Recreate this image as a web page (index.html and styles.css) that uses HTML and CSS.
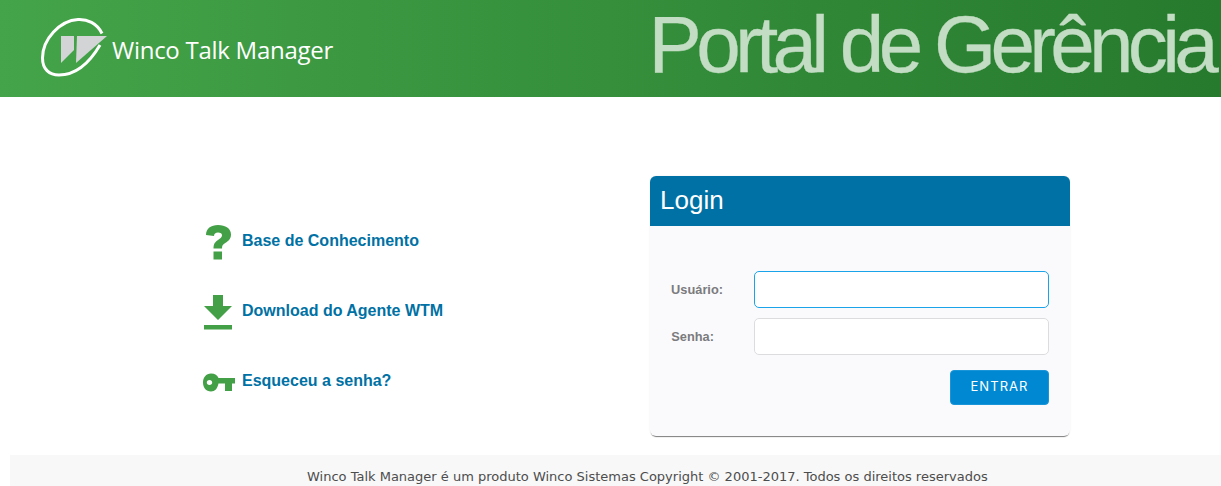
FILE: index.html
```html
<!DOCTYPE html>
<html lang="pt-BR">
<head>
<meta charset="utf-8">
<title>Portal de Gerência</title>
<link rel="stylesheet" href="styles.css">
</head>
<body>
<header class="top">
  <div class="brand">
    <svg class="logo" width="68" height="60" viewBox="0 0 68 60">
      <path d="M62 16.500C57 6 47 2 38 2.500C20 3.500 2.500 22 2.500 41C2.500 52 9 58 19 58C36 58 50 45 60 28" fill="none" stroke="#fff" stroke-width="3"/>
      <path d="M21 19H34V33L21 46Z" fill="#d2d4d6"/>
      <path d="M37 19H67L36 46Z" fill="#d2d4d6"/>
    </svg>
    <span class="brand-name">Winco Talk Manager</span>
  </div>
  <h1 class="title">Portal de Gerência</h1>
</header>
<main class="content">
  <nav class="links">
    <a class="link" href="#">
      <span class="icon">
        <svg width="30" height="40" viewBox="0 0 30 40"><path transform="translate(0 2.500)" d="M3 12.500C3 6 8 2.500 15 2.500C22.500 2.500 28 6 28 12C28 17 24.500 19 21.500 21C19.500 22.300 19 23.500 19 26H10.500C10.500 21.500 12 19.500 15 17.500C17.500 15.800 19 14.800 19 12.800C19 11 17.500 10 15 10C12.500 10 11 11.300 11 13.500Z M10.500 29H19V37H10.500Z" fill="#43a047"/></svg>
      </span>
      <span class="link-text">Base de Conhecimento</span>
    </a>
    <a class="link" href="#">
      <span class="icon">
        <svg width="30" height="40" viewBox="0 0 30 40"><path transform="translate(0 5)" d="M10 0H20V11H29L15 25L1 11H10ZM1 30H29V34.500H1Z" fill="#43a047"/></svg>
      </span>
      <span class="link-text">Download do Agente WTM</span>
    </a>
    <a class="link" href="#">
      <span class="icon">
        <svg width="34" height="30" viewBox="0 0 34 30"><path fill-rule="evenodd" d="M10 8.500C14 8.500 16.500 10.500 17.500 13H34V18.500H31V26H24V18.500H17.500C16.500 23.500 14 26.500 10 26.500C5 26.500 2 22.500 2 17.500C2 12.500 5 8.500 10 8.500ZM8.500 15C6.800 15 5.800 16 5.800 17.500C5.800 19 6.800 20 8.500 20C10.200 20 11.200 19 11.200 17.500C11.200 16 10.200 15 8.500 15Z" fill="#43a047"/></svg>
      </span>
      <span class="link-text">Esqueceu a senha?</span>
    </a>
  </nav>
  <section class="card">
    <h2 class="card-title">Login</h2>
    <form class="card-body">
      <div class="row">
        <label class="label" for="user">Usuário:</label>
        <input class="field field-focus" id="user" type="text">
      </div>
      <div class="row">
        <label class="label label-alt" for="pass">Senha:</label>
        <input class="field" id="pass" type="password">
      </div>
      <div class="actions">
        <button class="btn" type="button">ENTRAR</button>
      </div>
    </form>
  </section>
</main>
<footer class="foot">Winco Talk Manager é um produto Winco Sistemas Copyright © 2001-2017. Todos os direitos reservados</footer>
</body>
</html>
```
FILE: styles.css
```css
* { box-sizing: border-box; }
html, body { margin: 0; padding: 0; }
body { background: #fff; height: 486px; overflow: hidden; font-family: "Liberation Sans", Arial, sans-serif; }
.top {
  height: 97px;
  background: linear-gradient(90deg, #44a449 0%, #267a2d 100%);
  display: flex;
  justify-content: space-between;
  align-items: flex-start;
  padding: 0 8px 0 40px;
  overflow: hidden;
}
.brand { display: flex; align-items: center; height: 97px; }
.logo { display: block; margin-top: -3px; flex: none; }
.brand-name { color: #fff; font-family: "Open Sans", sans-serif; font-size: 24px; margin-left: 4px; letter-spacing: -0.27px; position: relative; top: 1px; white-space: nowrap; }
.title {
  margin: 0;
  font-weight: 400;
  font-size: 80px;
  line-height: 90px;
  letter-spacing: -5.7px;
  color: #c3ddc4;
  white-space: nowrap;
  -webkit-text-stroke: 0.3px #c3ddc4;
}
.content { display: flex; height: 358px; }
.links { width: 650px; padding: 123px 0 0 200px; display: flex; flex-direction: column; gap: 30px; }
.link { display: flex; align-items: center; height: 40px; color: #0071a4; text-decoration: none; font-weight: 700; font-size: 16px; }
.link-text { margin-top: 2px; }
.icon { width: 42px; display: flex; justify-content: center; padding-right: 6px; flex: none; }
.card {
  margin-top: 79px;
  width: 420px;
  height: 260px;
  border-radius: 6px;
  background: #fafafc;
  box-shadow: 0 2px 1px -1px rgba(0,0,0,.5), 0 0 2px rgba(0,0,0,.08);
  overflow: hidden;
}
.card-title { margin: 0; height: 50px; background: #0071a4; color: #fff; font-weight: 400; font-size: 26px; line-height: 48px; padding-left: 10px; }
.card-body { padding: 45px 21px 0 0; display: flex; flex-direction: column; }
.row { display: flex; align-items: center; height: 37px; margin-bottom: 10px; }
.label { width: 104px; text-align: right; padding-right: 31px; color: #7b7b7e; font-size: 12.800px; font-weight: 700; }
.label-alt { padding-right: 40px; }
.field { width: 295px; height: 37px; border: 1px solid #dcdcdf; border-radius: 5px; background: #fff; outline: none; padding: 0 8px; }
.field-focus { border-color: #1aa3e8; }
.actions { display: flex; justify-content: flex-end; margin-top: 5px; }
.btn { width: 99px; height: 35px; background: #0089d2; color: #fff; border: 1px solid #1a95d8; border-radius: 4px; font-family: "Inter", sans-serif; font-size: 13px; letter-spacing: 1.050px; padding: 0 0 3px; }
.foot { margin-left: 10px; height: 31px; background: #f8f8f8; color: #4d4d4d; font-family: "DejaVu Sans", sans-serif; font-size: 13px; padding: 13px 0 0 297px; line-height: 17px; white-space: nowrap; overflow: hidden; }
```
